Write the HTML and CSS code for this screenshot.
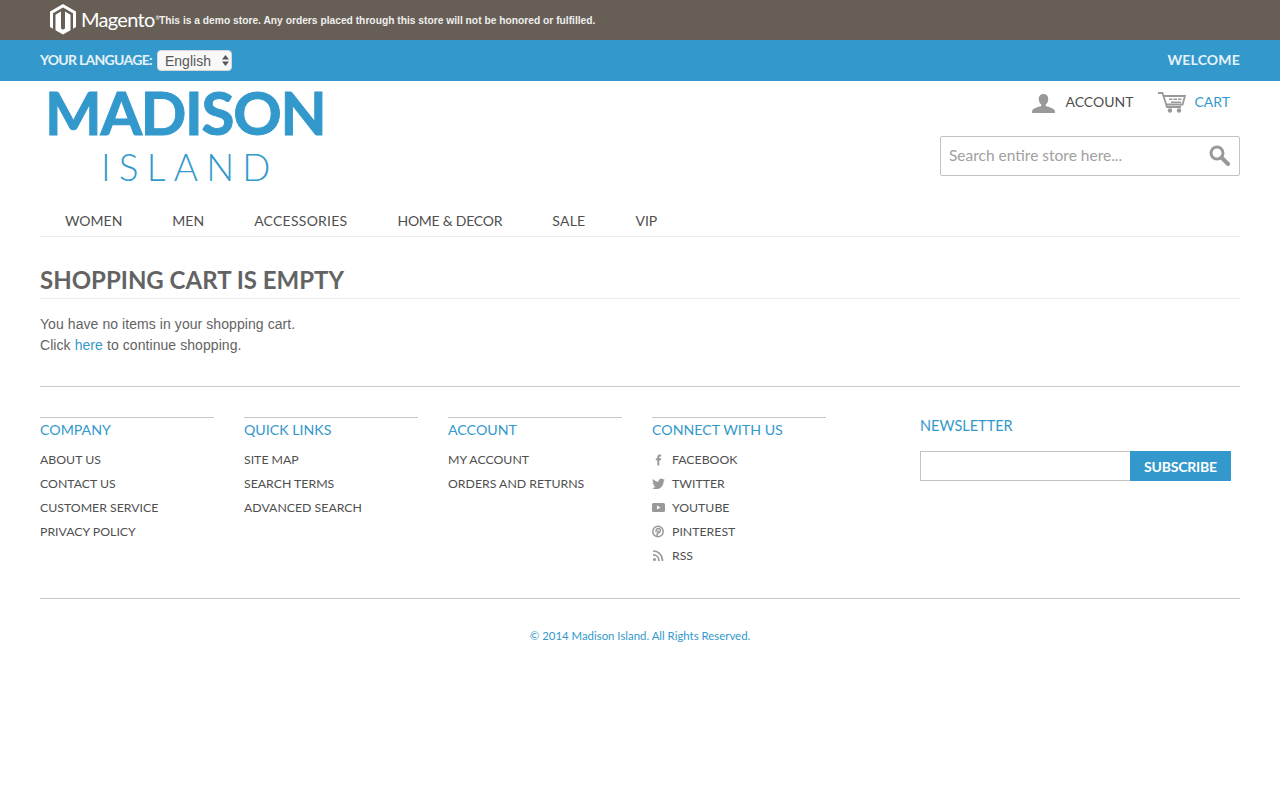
FILE: index.html
```html
<!DOCTYPE html>
<html lang="en">
<head>
<meta charset="utf-8">
<title>Shopping Cart</title>
<link rel="stylesheet" href="styles.css">
</head>
<body>
<div class="demo">
  <svg class="mage-logo" width="26" height="31" viewBox="0 0 26 31"><path fill="#fff" d="M13 0 26 7.500V23L23 24.700V9.300L13 3.500 3 9.300V24.700L0 23V7.500Z"/><path fill="#fff" d="M5.500 10.800 11 7.600V24.500L13 25.700 15 24.500V7.600L20.500 10.800V26.200L13 30.500 5.500 26.200Z"/></svg>
  <span class="mage-word">Magento<sup class="mage-tm">®</sup></span>
  <span class="demo-text">This is a demo store. Any orders placed through this store will not be honored or fulfilled.</span>
</div>
<div class="topbar">
  <div class="lang">
    <label class="lang-label" for="lang">YOUR LANGUAGE:</label>
    <span class="select-wrap">
      <select id="lang" class="lang-select"><option>English</option></select>
      <svg class="select-arrows" width="7" height="11" viewBox="0 0 7 11"><path fill="#555" d="M3.500 0 7 4.500H0ZM3.500 11 0 6.500H7Z"/></svg>
    </span>
  </div>
  <span class="welcome">WELCOME</span>
</div>
<div class="page">
  <header class="header">
    <a class="logo" href="#">
      <span class="logo-main">MADISON</span>
      <span class="logo-sub">ISLAND</span>
    </a>
    <div class="header-right">
      <div class="account-links">
        <a class="acct" href="#">
          <svg class="acct-icon" width="23" height="19" viewBox="0 0 24 20"><path fill="#999" d="M12 0c3.200 0 5 2.300 5 5.300 0 2.400-1 4.700-2.600 5.700v1.600c2.800 1 9.600 2.500 9.600 5.400V20H0v-2c0-2.900 6.800-4.400 9.600-5.400V11C8 10 7 7.700 7 5.300 7 2.300 8.800 0 12 0Z"/></svg>
          <span class="acct-text">ACCOUNT</span>
        </a>
        <a class="cart" href="#">
          <svg class="cart-icon" width="28" height="21" viewBox="0 0 28 21"><g fill="none" stroke="#999" stroke-width="1.800"><path d="M0 1h4.500L9 15h14"/><path d="M6 4h21L24.500 12.500H8.500"/></g><path fill="#999" d="M11 6.500h3.500V8H11zM15.500 6.500H19V8h-3.500zM20 6.500h3.500V8H20zM13 9.500h10v1.500H13z"/><circle cx="12" cy="18.500" r="2.200" fill="#999"/><circle cx="21" cy="18.500" r="2.200" fill="#999"/></svg>
          <span class="cart-text">CART</span>
        </a>
      </div>
      <form class="search">
        <input class="search-input" type="text" placeholder="Search entire store here...">
        <svg class="search-icon" width="21" height="21" viewBox="0 0 21 21"><circle cx="8" cy="8" r="6" fill="none" stroke="#999" stroke-width="3"/><path d="M12.500 12.500 19 19" stroke="#999" stroke-width="4" stroke-linecap="round"/></svg>
      </form>
    </div>
  </header>
  <nav class="nav">
    <a class="nav-item" href="#">WOMEN</a>
    <a class="nav-item" href="#">MEN</a>
    <a class="nav-item nav-wide" href="#">ACCESSORIES</a>
    <a class="nav-item nav-tight" href="#">HOME &amp; DECOR</a>
    <a class="nav-item nav-wide" href="#">SALE</a>
    <a class="nav-item" href="#">VIP</a>
  </nav>
  <main class="main">
    <h1 class="title">SHOPPING CART IS EMPTY</h1>
    <p class="msg">You have no items in your shopping cart.</p>
    <p class="msg">Click <a class="link" href="#">here</a> to continue shopping.</p>
  </main>
  <footer class="footer">
    <div class="footer-cols">
      <div class="col">
        <h6 class="col-title">COMPANY</h6>
        <a class="col-link" href="#">ABOUT US</a>
        <a class="col-link" href="#">CONTACT US</a>
        <a class="col-link" href="#">CUSTOMER SERVICE</a>
        <a class="col-link" href="#">PRIVACY POLICY</a>
      </div>
      <div class="col">
        <h6 class="col-title">QUICK LINKS</h6>
        <a class="col-link" href="#">SITE MAP</a>
        <a class="col-link" href="#">SEARCH TERMS</a>
        <a class="col-link" href="#">ADVANCED SEARCH</a>
      </div>
      <div class="col">
        <h6 class="col-title">ACCOUNT</h6>
        <a class="col-link" href="#">MY ACCOUNT</a>
        <a class="col-link" href="#">ORDERS AND RETURNS</a>
      </div>
      <div class="col">
        <h6 class="col-title">CONNECT WITH US</h6>
        <a class="col-link social" href="#"><span class="soc-icon"><svg width="13" height="13" viewBox="0 0 13 13"><path fill="#999" d="M5.300 12.500V7.300H3.800V5.300h1.500V4c0-1.700 1-2.500 2.400-2.500H9.200v2H8.100c-.6 0-.8.200-.8.800v1h1.900L8.900 7.300H7.300v5.200Z"/></svg></span>FACEBOOK</a>
        <a class="col-link social" href="#"><span class="soc-icon"><svg width="13" height="13" viewBox="0 0 13 13"><path fill="#999" d="M13 2.700c-.5.200-1 .4-1.500.4.500-.3 1-.8 1.200-1.400-.5.300-1.100.5-1.700.6A2.700 2.700 0 0 0 6.500 4.700C4.300 4.600 2.300 3.500 1 1.900c-.7 1.200-.4 2.800.8 3.600-.4 0-.8-.1-1.200-.3 0 1.300.9 2.400 2.100 2.700-.4.100-.8.100-1.200 0 .3 1.100 1.300 1.900 2.500 1.900-1.100.9-2.600 1.300-4 1.100 4.600 2.900 11.700.7 11.700-7.200.5-.3.900-.7 1.300-1Z"/></svg></span>TWITTER</a>
        <a class="col-link social" href="#"><span class="soc-icon"><svg width="13" height="13" viewBox="0 0 13 13"><path fill="#999" fill-rule="evenodd" d="M1.500 2h10A1.500 1.500 0 0 1 13 3.500v6a1.500 1.500 0 0 1-1.500 1.500h-10A1.500 1.500 0 0 1 0 9.500v-6A1.500 1.500 0 0 1 1.500 2ZM5 4.500v4l3.500-2Z"/></svg></span>YOUTUBE</a>
        <a class="col-link social" href="#"><span class="soc-icon"><svg width="13" height="13" viewBox="0 0 13 13"><circle cx="6" cy="6.500" r="5.200" fill="none" stroke="#999" stroke-width="1.500"/><path fill="none" stroke="#999" stroke-width="1.500" d="M4.800 11 6.200 5.500M4.200 7C3.600 5 4.800 3.500 6.400 3.500c1.500 0 2.200 1 2 2.200C8.200 7.300 7 8.200 5.600 7.500"/></svg></span>PINTEREST</a>
        <a class="col-link social" href="#"><span class="soc-icon"><svg width="13" height="13" viewBox="0 0 13 13"><g fill="none" stroke="#999" stroke-width="1.700"><path d="M1 2c5.500 0 9.500 4 9.500 10"/><path d="M1 5.800c3.500 0 6 2.700 6 6.200"/></g><circle cx="2.500" cy="10.500" r="1.600" fill="#999"/></svg></span>RSS</a>
      </div>
      <div class="newsletter">
        <h6 class="news-title">NEWSLETTER</h6>
        <form class="news-form">
          <input class="news-input" type="text" aria-label="Email">
          <button class="news-btn" type="button">SUBSCRIBE</button>
        </form>
      </div>
    </div>
    <p class="copyright">© 2014 Madison Island. All Rights Reserved.</p>
  </footer>
</div>
</body>
</html>
```
FILE: styles.css
```css
* { box-sizing: border-box; }
html, body { margin: 0; padding: 0; background: #fff; }
body { font-family: "Lato", "Liberation Sans", sans-serif; color: #636363; }
a { text-decoration: none; color: inherit; }
h1, h6, p { margin: 0; }

.demo { height: 40px; background: #675f55; display: flex; align-items: center; padding-left: 50px; color: #fff; }
.mage-logo { display: block; flex: none; margin-top: -2px; }
.mage-word { font: 400 20px "Lato", sans-serif; letter-spacing: -0.7px; margin: -3px 0 0 5px; width: 72px; white-space: nowrap; }
.mage-tm { font-size: 5px; vertical-align: 7px; line-height: 0; margin-left: 1px; }
.demo-text { font: 700 10.25px "Liberation Sans", sans-serif; color: #eee; margin-left: 6px; }

.topbar { height: 41px; background: #3399cc; display: flex; align-items: center; justify-content: space-between; padding: 0 40px; color: #e6f2f8; }
.lang { display: flex; align-items: center; }
.lang-label { font: 700 14px "Lato", sans-serif; letter-spacing: -0.72px; width: 117px; white-space: nowrap; padding-bottom: 2px; }
.select-wrap { position: relative; display: block; }
.lang-select { appearance: none; -webkit-appearance: none; display: block; width: 75px; height: 21px; border: 1px solid #d8d8d8; border-radius: 4px; background: #f8f8f8; font: 400 14px "Liberation Sans", sans-serif; color: #555; padding: 0 0 0 7px; margin: 0; }
.select-arrows { position: absolute; right: 3px; top: 5px; pointer-events: none; }
.welcome { font: 700 14px "Lato", sans-serif; letter-spacing: 0.18px; padding-bottom: 2px; }

.page { padding: 0 40px; }
.header { display: flex; justify-content: space-between; height: 115px; }
.logo { display: block; width: 300px; color: #3399cc; }
.logo-main { display: block; font: 700 60px/58px "Lato", sans-serif; letter-spacing: -1.3px; -webkit-text-stroke: 1px #3399cc; margin-top: 2px; padding-left: 5px; white-space: nowrap; }
.logo-sub { display: block; font: 300 37px/44px "Lato", sans-serif; letter-spacing: 8.2px; padding-left: 61px; margin-top: 4px; white-space: nowrap; }
.header-right { width: 300px; display: flex; flex-direction: column; align-items: flex-end; }
.account-links { display: flex; align-items: center; height: 20px; margin-top: 10px; padding-right: 10px; font-size: 14px; }
.acct, .cart { display: flex; align-items: center; }
.acct-icon { margin: 4px 10px 0 0; }
.acct-text { color: #4f4f4f; width: 93px; white-space: nowrap; }
.cart-icon { margin: 3px 8px 0 0; }
.cart-text { color: #3399cc; white-space: nowrap; }
.search { position: relative; width: 300px; height: 40px; margin-top: 25px; }
.search-input { display: block; width: 100%; height: 100%; border: 1px solid #c2c2c2; border-radius: 2px; padding: 0 40px 2px 8px; font: 400 15.5px "Lato", sans-serif; color: #636363; background: #fff; outline: 0; }
.search-input::placeholder { color: #a0a0a0; opacity: 1; }
.search-icon { position: absolute; right: 10px; top: 9px; }

.nav { display: flex; height: 41px; border-bottom: 1px solid #ededed; padding: 8px 0 0 25px; align-items: center; font-size: 14px; color: #4f4f4f; }
.nav-item { white-space: nowrap; margin-right: 50px; }
.nav-wide { letter-spacing: 0.25px; }
.nav-tight { letter-spacing: -0.25px; }

.main { padding-top: 28px; }
.title { font: 700 24px/29px "Lato", sans-serif; color: #636363; letter-spacing: 0; border-bottom: 1px solid #ededed; height: 34px; margin-bottom: 15px; }
.msg { font: 400 14px/21px "Liberation Sans", sans-serif; letter-spacing: 0.07px; color: #636363; }
.link { color: #3399cc; }

.footer { margin-top: 30px; border-top: 1px solid #c8c8c8; padding-top: 30px; }
.footer-cols { display: flex; height: 182px; border-bottom: 1px solid #c8c8c8; }
.col { width: 174px; margin-right: 30px; border-top: 1px solid #c8c8c8; flex: none; }
.col-title { font: 400 14.2px/24px "Lato", sans-serif; color: #3399cc; margin-bottom: 5px; white-space: nowrap; }
.col-link { display: flex; align-items: center; height: 24px; font-size: 12.3px; color: #4f4f4f; white-space: nowrap; }
.soc-icon { width: 20px; display: block; flex: none; height: 13px; }
.soc-icon svg { display: block; }
.newsletter { margin-left: 64px; width: 311px; flex: none; }
.news-title { font: 400 14.5px/18px "Lato", sans-serif; color: #3399cc; padding-bottom: 16px; white-space: nowrap; }
.news-form { display: flex; height: 30px; }
.news-input { width: 210px; height: 30px; border: 1px solid #c2c2c2; border-right: 0; background: #fff; padding: 0; margin: 0; }
.news-btn { width: 101px; height: 30px; border: 0; background: #3399cc; color: #fff; font: 700 14px "Lato", sans-serif; letter-spacing: -0.2px; padding: 0; }
.copyright { font: 400 11.4px/18px "Lato", sans-serif; color: #3399cc; text-align: center; margin-top: 28px; }
```
